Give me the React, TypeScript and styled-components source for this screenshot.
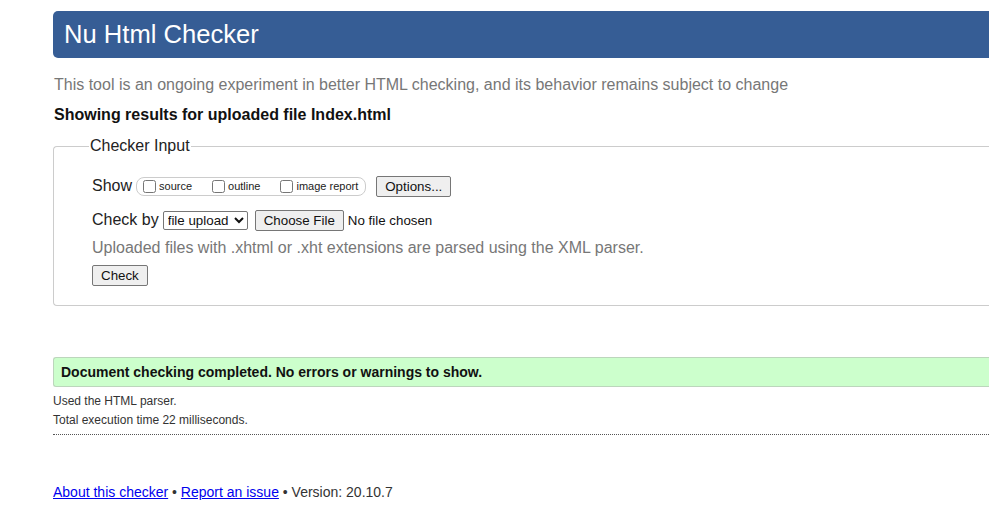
import React from 'react'
import styled, { createGlobalStyle } from 'styled-components'

const GlobalStyle = createGlobalStyle`
  html, body {
    margin: 0;
    padding: 0;
    overflow: hidden;
    background: #fff;
  }
  body {
    font-family: "Liberation Sans", Arial, sans-serif;
    color: #222;
  }
`

const Page = styled.div`
  width: 1100px;
  padding: 11px 0 0 53px;
`

const Header = styled.header`
  height: 47px;
  background: #365d95;
  border-radius: 5px 0 0 5px;
  padding-left: 11px;
  display: flex;
  align-items: center;
`

const Title = styled.h1`
  margin: 0;
  font-size: 25.6px;
  font-weight: normal;
  color: #fff;
  line-height: 47px;
`

const Tagline = styled.p`
  margin: 18px 0 0 1px;
  font-size: 16px;
  line-height: 18px;
  color: #777;
`

const ResultsFor = styled.p`
  margin: 12px 0 0 1px;
  font-size: 16px;
  line-height: 18px;
  font-weight: bold;
  color: #111;
`

const InputBox = styled.fieldset`
  margin: 13px 0 0 0;
  padding: 21px 0 19px 38px;
  border: 1px solid #ccc;
  border-right: none;
  border-radius: 4px 0 0 4px;
`

const Legend = styled.legend`
  margin-left: -3px;
  padding: 0 1px;
  font-size: 16px;
  line-height: 18px;
  color: #222;
`

const Row = styled.div<{ $gap?: number }>`
  display: flex;
  align-items: center;
  height: 20px;
  margin-bottom: ${p => p.$gap ?? 0}px;
  font-size: 16px;
  color: #222;
`

const RowLabel = styled.span`
  margin-right: 4px;
`

const ShowGroup = styled.span`
  display: inline-flex;
  align-items: center;
  height: 17px;
  border: 1px solid #ccc;
  border-radius: 8px;
  padding: 0 7px 0 6px;
  margin-right: 10px;
`

const Option = styled.label<{ $last?: boolean }>`
  display: inline-flex;
  align-items: center;
  font-size: 11px;
  color: #222;
  margin-right: ${p => (p.$last ? 0 : 20)}px;
`

const Box = styled.input`
  width: 13px;
  height: 13px;
  margin: 0 3px 0 0;
`

const Button = styled.button`
  font-family: "Liberation Sans", Arial, sans-serif;
  font-size: 13.33px;
  height: 21px;
  padding: 0 8px;
  background: #efefef;
  color: #111;
  border: 1px solid #767676;
  border-radius: 2px;
  line-height: 19px;
`

const Select = styled.select`
  font-family: "Liberation Sans", Arial, sans-serif;
  font-size: 13.33px;
  width: 85px;
  height: 19px;
  padding: 0;
  margin-right: 7px;
  border: 1px solid #767676;
  border-radius: 2px;
  background: #fff;
  color: #111;
`

const FileInput = styled.input`
  font-family: "Liberation Sans", Arial, sans-serif;
  font-size: 13.33px;
  color: #111;
  &::file-selector-button {
    font-family: "Liberation Sans", Arial, sans-serif;
    font-size: 13.33px;
    height: 21px;
    padding: 0 8px;
    margin-right: 4px;
    background: #efefef;
    color: #111;
    border: 1px solid #767676;
    border-radius: 2px;
  }
`

const Hint = styled.p`
  margin: 9px 0 0 0;
  font-size: 16px;
  line-height: 18px;
  color: #777;
`

const CheckRow = styled.div`
  margin-top: 8px;
  height: 21px;
  display: flex;
`

const Success = styled.div`
  margin-top: 51px;
  height: 28px;
  display: flex;
  align-items: center;
  padding-left: 7px;
  background: #ccffcc;
  border: 1px solid #bcd6bc;
  border-right: none;
  border-radius: 3px 0 0 3px;
  font-size: 14px;
  font-weight: bold;
  color: #111;
`

const Stats = styled.div`
  margin-top: 5px;
  padding-bottom: 4px;
  border-bottom: 1px dotted #555;
  font-size: 12px;
  line-height: 19px;
  color: #333;
`

const StatLine = styled.p`
  margin: 0;
`

const Footer = styled.p`
  margin: 48px 0 0 0;
  font-size: 14px;
  line-height: 18px;
  color: #333;
`

const Link = styled.a`
  color: #0000ee;
  text-decoration: underline;
`

function App() {
  return (
    <>
      <GlobalStyle />
      <Page>
        <Header>
          <Title>Nu Html Checker</Title>
        </Header>
        <Tagline>
          This tool is an ongoing experiment in better HTML checking, and its behavior remains subject to change
        </Tagline>
        <ResultsFor>Showing results for uploaded file Index.html</ResultsFor>

        <InputBox>
          <Legend>Checker Input</Legend>
          <Row $gap={14}>
            <RowLabel>Show</RowLabel>
            <ShowGroup>
              <Option><Box type="checkbox" />source</Option>
              <Option><Box type="checkbox" />outline</Option>
              <Option $last><Box type="checkbox" />image report</Option>
            </ShowGroup>
            <Button>Options...</Button>
          </Row>
          <Row>
            <RowLabel>Check by</RowLabel>
            <Select defaultValue="file">
              <option value="address">address</option>
              <option value="file">file upload</option>
              <option value="text">text input</option>
            </Select>
            <FileInput type="file" />
          </Row>
          <Hint>Uploaded files with .xhtml or .xht extensions are parsed using the XML parser.</Hint>
          <CheckRow>
            <Button>Check</Button>
          </CheckRow>
        </InputBox>

        <Success>Document checking completed. No errors or warnings to show.</Success>
        <Stats>
          <StatLine>Used the HTML parser.</StatLine>
          <StatLine>Total execution time 22 milliseconds.</StatLine>
        </Stats>

        <Footer>
          <Link href="#">About this checker</Link> • <Link href="#">Report an issue</Link> • Version: 20.10.7
        </Footer>
      </Page>
    </>
  )
}

export default App
